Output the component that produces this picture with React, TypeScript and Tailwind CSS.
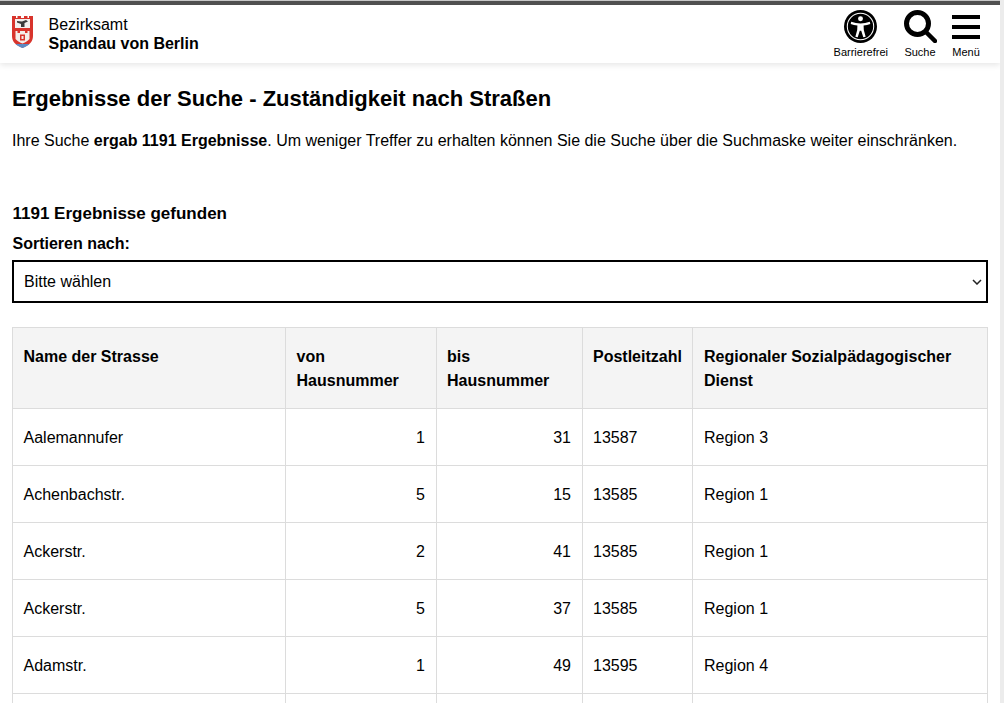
const rows = [
  { name: "Aalemannufer", from: 1, to: 31, zip: "13587", region: "Region 3" },
  { name: "Achenbachstr.", from: 5, to: 15, zip: "13585", region: "Region 1" },
  { name: "Ackerstr.", from: 2, to: 41, zip: "13585", region: "Region 1" },
  { name: "Ackerstr.", from: 5, to: 37, zip: "13585", region: "Region 1" },
  { name: "Adamstr.", from: 1, to: 49, zip: "13595", region: "Region 4" },
];

function Crest() {
  return (
    <svg width="21" height="32" viewBox="0 0 21 32" className="mt-[1px]">
      <path d="M0 0h4v2h1.500V0H9v2h3V0h3.500v2H17V0h4v20c0 6-4 9-10.500 12C4 29 0 26 0 20z" fill="#d8342c" />
      <path d="M3 3h15v9H3z" fill="#f2f0ee" />
      <path d="M5 5l5 .5 4-1.500 2 1.500-3.500 1.500v4h-3.500V8L5 6.500z" fill="#3a3a3a" />
      <path d="M3.500 15h2v2h2.500v-2h5v2h2.500v-2h2v8c-2 2.500-4.500 3.500-7 4.500-2.500-1-5-2-7-4.500z" fill="#f4eeea" />
      <path d="M8 18.500h5v6H8z" fill="#d8342c" />
      <path d="M9.500 20h2v3h-2z" fill="#f4eeea" />
      <path d="M3.500 28h14c-2 1.800-4 3-7 4-3-1-5-2.200-7-4z" fill="#5b8ac4" />
    </svg>
  );
}

function AccessIcon() {
  return (
    <svg width="33" height="33" viewBox="0 0 32 32">
      <circle cx="16" cy="16" r="16" fill="#000" />
      <circle cx="16" cy="16" r="12.800" fill="none" stroke="#fff" strokeWidth="1" />
      <circle cx="16" cy="8.500" r="2.400" fill="#fff" />
      <path
        d="M7 11.500c3 1 6 1.500 9 1.500s6-.5 9-1.500l.5 2c-2 .7-4.200 1.200-6.500 1.500l.2 4.500 1.800 6.500-2.300.5-2-6.500h-1.400l-2 6.500-2.300-.5 1.800-6.500.2-4.500c-2.300-.3-4.500-.8-6.500-1.500z"
        fill="#fff"
      />
    </svg>
  );
}

function SearchIcon() {
  return (
    <svg width="33" height="33" viewBox="0 0 33 33">
      <circle cx="13.500" cy="13.500" r="11" fill="none" stroke="#000" strokeWidth="5" />
      <path d="M21.500 21.500L31 31" fill="none" stroke="#000" strokeWidth="4.500" strokeLinecap="round" />
    </svg>
  );
}

function HeaderAction({ label, icon }: { label: string; icon: React.ReactNode }) {
  return (
    <div className="flex flex-col items-center">
      <div className="flex h-[33px] items-center justify-center">{icon}</div>
      <span className="mt-[2px] text-[11px] leading-[14px] text-black">{label}</span>
    </div>
  );
}

export default function App() {
  return (
    <div className="flex h-[703px] overflow-hidden bg-white font-['Liberation_Sans',Arial,sans-serif] text-[16px] text-black">
      <div className="w-[1000px] shrink-0">
        <header className="bg-white shadow-[0_2px_6px_rgba(0,0,0,0.1)]">
          <div className="h-[1px] bg-[#c8c8c8]" />
          <div className="h-[4px] bg-[#505050]" />
          <div className="flex h-[58px] items-start justify-between pr-[20px] pl-[12px]">
            <div className="flex items-start gap-[15.500px] pt-[10px]">
              <Crest />
              <div className="text-[16px] leading-[19px]">
                <div>Bezirksamt</div>
                <div className="font-bold">Spandau von Berlin</div>
              </div>
            </div>
            <div className="flex gap-[15.500px] pt-[5px]">
              <HeaderAction label="Barrierefrei" icon={<AccessIcon />} />
              <HeaderAction label="Suche" icon={<SearchIcon />} />
              <HeaderAction
                label="Menü"
                icon={
                  <div className="flex w-[28px] flex-col gap-[6px]">
                    <div className="h-[4px] bg-black" />
                    <div className="h-[4px] bg-black" />
                    <div className="h-[4px] bg-black" />
                  </div>
                }
              />
            </div>
          </div>
        </header>

        <main className="px-[12px]">
          <h1 className="mt-[23px] text-[22px] leading-[26px] font-bold">
            Ergebnisse der Suche - Zuständigkeit nach Straßen
          </h1>
          <p className="mt-[17px] leading-[24px]">
            Ihre Suche <b>ergab 1191 Ergebnisse</b>. Um weniger Treffer zu erhalten können Sie die
            Suche über die Suchmaske weiter einschränken.
          </p>
          <div className="mt-[49px] pl-[0.500px] text-[17px] leading-[24px] font-bold">
            1191 Ergebnisse gefunden
          </div>
          <div className="mt-[6px] pl-[0.500px] leading-[24px] font-bold">Sortieren nach:</div>

          <div className="mt-[4px] flex h-[43px] w-[976px] items-center justify-between border-2 border-black bg-white pr-[3px] pl-[10px]">
            <span>Bitte wählen</span>
            <svg width="10" height="6" viewBox="0 0 10 6" className="mr-[1px]">
              <path d="M1 1l4 4 4-4" fill="none" stroke="#222" strokeWidth="1.500" />
            </svg>
          </div>

          <table className="mt-[24px] w-[976px] table-fixed border-collapse">
            <colgroup>
              <col className="w-[273px]" />
              <col className="w-[151px]" />
              <col className="w-[146px]" />
              <col className="w-[110px]" />
              <col />
            </colgroup>
            <thead>
              <tr className="h-[81px] bg-[#f4f4f4] text-left align-top leading-[24px] font-bold">
                <th className="border border-[#dcdcdc] px-[10.500px] pt-[17px]">Name der Strasse</th>
                <th className="border border-[#dcdcdc] px-[10.500px] pt-[17px]">von Hausnummer</th>
                <th className="border border-[#dcdcdc] px-[10px] pt-[17px]">bis Hausnummer</th>
                <th className="border border-[#dcdcdc] px-[10px] pt-[17px]">Postleitzahl</th>
                <th className="border border-[#dcdcdc] px-[11px] pt-[17px]">
                  Regionaler Sozialpädagogischer Dienst
                </th>
              </tr>
            </thead>
            <tbody>
              {rows.map((row, i) => (
                <tr key={i} className="h-[57px]">
                  <td className="border border-[#dcdcdc] px-[10.500px] pt-[2px]">{row.name}</td>
                  <td className="border border-[#dcdcdc] px-[11px] pt-[2px] text-right">{row.from}</td>
                  <td className="border border-[#dcdcdc] px-[11px] pt-[2px] text-right">{row.to}</td>
                  <td className="border border-[#dcdcdc] px-[10px] pt-[2px]">{row.zip}</td>
                  <td className="border border-[#dcdcdc] px-[11px] pt-[2px]">{row.region}</td>
                </tr>
              ))}
              {/* next row is cut off by the window */}
              <tr className="h-[57px]">
                <td className="border border-[#dcdcdc]" />
                <td className="border border-[#dcdcdc]" />
                <td className="border border-[#dcdcdc]" />
                <td className="border border-[#dcdcdc]" />
                <td className="border border-[#dcdcdc]" />
              </tr>
            </tbody>
          </table>
        </main>
      </div>
      <div className="w-[4px] shrink-0 bg-[#ececec]" />
    </div>
  );
}
